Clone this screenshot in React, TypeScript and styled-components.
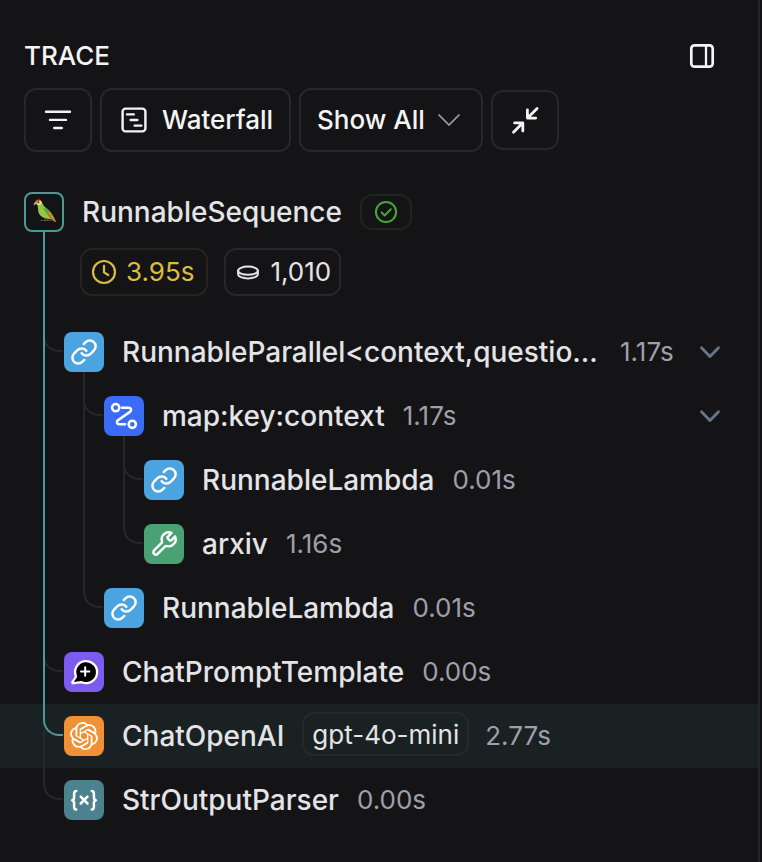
import React from "react";
import styled, { createGlobalStyle, css } from "styled-components";
import { SiOpenai } from "react-icons/si";

const color = {
  bg: "#141416",
  border: "#27272a",
  guide: "#27272a",
  active: "#4b9a96",
  text: "#f4f4f5",
  name: "#e4e4e7",
  muted: "#a09fa9",
};

const GlobalStyle = createGlobalStyle`
  * { box-sizing: border-box; }
  body {
    margin: 0;
    background: #111113;
    font-family: Inter, sans-serif;
    -webkit-font-smoothing: antialiased;
  }
`;

const Panel = styled.aside`
  width: 760px;
  height: 862px;
  background: ${color.bg};
  border-right: 2px solid #262628;
  overflow: hidden;
  color: ${color.text};
`;

const Header = styled.header`
  display: flex;
  align-items: center;
  justify-content: space-between;
  height: 88px;
  padding: 24px 42px 0 24px;
`;

const Title = styled.h1`
  margin: 0;
  font-size: 26px;
  font-weight: 500;
  line-height: 32px;
`;

const PlainButton = styled.button`
  display: flex;
  padding: 0;
  border: 0;
  background: none;
  color: inherit;
`;

const Toolbar = styled.div`
  display: flex;
  align-items: center;
  gap: 8px;
  height: 64px;
  padding: 0 24px;
`;

const ToolButton = styled.button<{ $width: number; $height?: number; $start?: number }>`
  display: flex;
  align-items: center;
  justify-content: ${(p) => (p.$start ? "flex-start" : "center")};
  width: ${(p) => p.$width}px;
  height: ${(p) => p.$height ?? 64}px;
  padding: 0 0 0 ${(p) => p.$start ?? 0}px;
  border: 2px solid ${color.border};
  border-radius: 12px;
  background: transparent;
  color: ${color.text};
  font: 500 26px/32px Inter, sans-serif;
  white-space: nowrap;
`;

const ButtonLabel = styled.span<{ $before?: number; $after?: number }>`
  margin-left: ${(p) => p.$before ?? 0}px;
  margin-right: ${(p) => p.$after ?? 0}px;
`;

const Svg = styled.svg`
  display: block;
  flex: none;
  fill: none;
  stroke: currentColor;
  stroke-linecap: round;
  stroke-linejoin: round;
  overflow: visible;
`;

const Root = styled.section`
  display: grid;
  grid-template-columns: 40px 1fr;
  column-gap: 16px;
  height: 128px;
  margin-top: 40px;
  padding-left: 24px;
`;

const RootRail = styled.div`
  display: flex;
  flex-direction: column;

  &::after {
    content: "";
    flex: 1;
    width: 2px;
    margin-left: 19px;
    background: ${color.active};
  }
`;

const RootAvatar = styled.div`
  display: flex;
  align-items: center;
  justify-content: center;
  width: 40px;
  height: 40px;
  border: 2px solid ${color.active};
  border-radius: 8px;
`;

const RootTitle = styled.div`
  display: flex;
  align-items: center;
  gap: 18px;
  height: 40px;
  padding-left: 2px;
`;

const Status = styled.span`
  display: flex;
  align-items: center;
  justify-content: center;
  width: 52px;
  height: 36px;
  border: 2px solid #1b261d;
  border-radius: 12px;
  color: #47a637;
`;

const Metrics = styled.div`
  display: flex;
  gap: 16px;
  margin-top: 16px;
`;

const Metric = styled.span<{ $tone?: "time" }>`
  display: flex;
  align-items: center;
  gap: 9px;
  height: 48px;
  padding: 0 8px 0 9px;
  border: 2px solid ${color.border};
  border-radius: 12px;
  color: ${color.name};
  font-size: 26px;
  line-height: 32px;
  ${(p) =>
    p.$tone === "time" &&
    css`
      padding-right: 12px;
      border-color: #28241c;
      color: #dcbc3f;
    `}
`;

const Tree = styled.div`
  display: flex;
  flex-direction: column;
`;

const Row = styled.div<{ $selected?: boolean }>`
  display: flex;
  align-items: center;
  height: 64px;
  padding: 0 34px 0 24px;
  background: ${(p) => (p.$selected ? "#1a2122" : "transparent")};
`;

const lineFill = (c: string) =>
  `linear-gradient(${c}, ${c}) 19px 0 / 2px 100% no-repeat`;

const Guide = styled.span<{ $line?: string }>`
  flex: none;
  width: 40px;
  height: 64px;
  background: ${(p) => (p.$line ? lineFill(p.$line) : "none")};
`;

const Elbow = styled.span<{ $color: string }>`
  display: block;
  width: 20px;
  height: 32px;
  margin-left: 19px;
  border: 0 solid ${(p) => p.$color};
  border-width: 0 0 2px 2px;
  border-bottom-left-radius: 16px;
`;

/* Keeps the active line on top of a grey branch that leaves it. */
const Junction = styled(Guide)`
  background: none;
  display: grid;
  grid-template: 64px / 19px 2px 19px;

  &::after {
    content: "";
    grid-area: 1 / 2;
    background: ${color.active};
  }

  & > ${Elbow} {
    grid-area: 1 / 1;
  }
`;

/* The active line turns into the row; the grey line continues below it. */
const ActiveTurn = styled(Guide)`
  background: linear-gradient(${color.guide}, ${color.guide}) 19px 26px / 2px 38px
    no-repeat;
`;

const NodeCell = styled.span<{ $open?: boolean }>`
  display: flex;
  flex: none;
  align-items: center;
  justify-content: center;
  width: 40px;
  height: 64px;
  background: ${(p) =>
    p.$open
      ? `linear-gradient(${color.guide}, ${color.guide}) 19px 52px / 2px 12px no-repeat`
      : "none"};
`;

const NodeIcon = styled.span<{ $bg: string }>`
  display: flex;
  align-items: center;
  justify-content: center;
  width: 40px;
  height: 40px;
  border-radius: 8px;
  background: ${(p) => p.$bg};
  color: #fff;
`;

const Name = styled.span<{ $width?: number }>`
  flex: none;
  width: ${(p) => (p.$width ? `${p.$width}px` : "auto")};
  color: ${color.name};
  font-size: 28px;
  font-weight: 500;
  line-height: 40px;
  white-space: nowrap;
`;

const RowBody = styled.div`
  display: flex;
  flex: 1;
  align-items: center;
  gap: 18px;
  padding-left: 18px;
`;

const ModelTag = styled.span`
  height: 44px;
  margin: 0 -2px 4px 0;
  padding: 0 8px;
  border: 2px solid #26292b;
  border-radius: 12px;
  color: ${color.name};
  font-size: 26px;
  line-height: 41px;
`;

const Duration = styled.span`
  color: ${color.muted};
  font-size: 26px;
  line-height: 32px;
`;

const Toggle = styled(PlainButton)`
  margin-left: auto;
  color: #64748b;
`;

const PanelIcon = () => (
  <Svg width="28" height="28" strokeWidth="2.7">
    <rect x="3.3" y="3.3" width="21.4" height="21.4" rx="3.2" />
    <path d="M18 3.5v21" strokeWidth="2.3" />
  </Svg>
);

const FilterIcon = () => (
  <Svg width="28" height="28" strokeWidth="2.4">
    <path d="M2 5.8h24M6 13.9h16M10.2 22h7.6" />
  </Svg>
);

const WaterfallIcon = () => (
  <Svg width="28" height="28" strokeWidth="2.4">
    <rect x="2.6" y="2.6" width="22.8" height="22.8" rx="3" />
    <path d="M7 8.4h6.8M10.6 14h6.8M14.6 19.6h6.8" />
  </Svg>
);

const CollapseIcon = () => (
  <Svg width="28" height="28" strokeWidth="2.8">
    <path d="M16.4 3.8v8.3h8.3M16.8 11.7l9.3-9.3M3.6 16.9h8.2v8.2M11.4 17.3l-8.9 8.9" />
  </Svg>
);

const ThinChevron = () => (
  <Svg width="22" height="12" strokeWidth="1.7">
    <path d="M1 1l10 10L21 1" stroke="#a1a1aa" />
  </Svg>
);

const ToggleChevron = () => (
  <Svg width="28" height="28" strokeWidth="2.9">
    <path d="M5.5 9.8l8.5 8.6 8.5-8.6" />
  </Svg>
);

const CheckIcon = () => (
  <Svg width="24" height="24" strokeWidth="2">
    <circle cx="12" cy="12" r="10.1" />
    <path d="M7.6 12.4l3 3.1 6.2-6.3" />
  </Svg>
);

const ClockIcon = () => (
  <Svg width="26" height="26" strokeWidth="2.2">
    <circle cx="13" cy="13" r="11" />
    <path d="M13 6.8v6.6l4.2 2.6" />
  </Svg>
);

const CoinIcon = () => (
  <Svg width="26" height="26" strokeWidth="2">
    <ellipse cx="13" cy="11.7" rx="9.9" ry="4.1" />
    <path d="M3.1 11.7v3.4c0 2.5 4.4 4.3 9.9 4.3s9.9-1.8 9.9-4.3v-3.4" />
  </Svg>
);

const ParrotIcon = () => (
  <Svg width="30" height="30" viewBox="0.8 0 28 28">
    <g stroke="none">
      <path d="M11.5 22h10" stroke="#4c4c49" strokeWidth="1" />
      <path d="M16 19.5l-.4 2M18.4 20v1.8" stroke="#6b5f4c" strokeWidth="1.1" />
      <path
        d="M7 3.2C9.5 2 12.6 3 13.4 6c.4 1.7 2 3.2 4 4.8 3.4 2.6 5.7 6 8.2 11.4.4 1-.5 1.2-1.1.6-1.8-1.6-3.6-2.5-5.8-2.6-4.6-.2-8.6-2.8-9.3-7.2-.3-2-.1-3.8-.7-5L7 3.2Z"
        fill="#92c648"
      />
      <path d="M14.4 9.6c3.8 2 6.7 5.3 8.5 8.9-4.1-.9-7.3-3.9-8.5-8.9Z" fill="#5da038" />
      <path d="M17.8 16.2c2.5 1 5.2 3.6 7.9 6.2.5.8-.4 1.1-1.1.5-2.6-2.1-5-3.4-6.8-6.7Z" fill="#e4562f" />
      <path d="M19 13.1c1.8 1.5 3.2 3.4 4.3 5.4l-3.9-2.4-.4-3Z" fill="#d88c2c" />
      <path d="M7.5 3.2c2.2-1.2 5-.4 5.4 2.2-.3 1.7-2 2.6-3.8 2L7 5.6Z" fill="#edda64" />
      <path d="M7.1 3.3c1.2-1.1 3-1.4 4.4-.6L8.8 4.4 7 4.9Z" fill="#cf3d32" />
      <path d="M8.3 4.7C6.6 3.9 5 5 5.3 8c.8-.9 2-1 2.8-1.6Z" fill="#bda58b" />
      <circle cx="9.7" cy="5" r=".8" fill="#202322" />
    </g>
  </Svg>
);

const LinkIcon = () => (
  <Svg width="28" height="28" viewBox="0 0 24 24" strokeWidth="2.1">
    <path d="M10 13a5 5 0 0 0 7.54.54l3-3a5 5 0 0 0-7.07-7.07l-1.72 1.71" />
    <path d="M14 11a5 5 0 0 0-7.54-.54l-3 3a5 5 0 0 0 7.07 7.07l1.71-1.71" />
  </Svg>
);

const RouteIcon = () => (
  <Svg width="28" height="28" strokeWidth="2.5">
    <circle cx="5.7" cy="5.7" r="3.6" />
    <circle cx="22.3" cy="22.3" r="3.6" />
    <path d="M12 5.8h6.6c2.6 0 3.3 2.5 1.4 4.1L7.9 18.2c-1.8 1.6-1 4.1 1.4 4.1h5.8" />
  </Svg>
);

const WrenchIcon = () => (
  <Svg width="28" height="28" viewBox="0 0 24 24" strokeWidth="2.1">
    <path d="M15.63 7.63c-.39-.4-.59-.59-.67-.82a1 1 0 0 1 0-.62c.08-.23.28-.43.67-.82l2.84-2.84A6 6 0 0 0 10 8c0 .49.06.97.17 1.43.12.48.18.73.17.88-.01.17-.04.25-.11.4-.07.13-.21.27-.48.54L3.5 17.5a2.12 2.12 0 0 0 3 3l6.25-6.25c.27-.27.41-.41.54-.48.15-.07.23-.1.4-.11.15-.01.4.05.88.17A6 6 0 0 0 21.47 5.53l-2.84 2.84c-.39.39-.59.59-.82.67a1 1 0 0 1-.62 0c-.23-.08-.43-.28-.82-.67Z" />
  </Svg>
);

const MessageIcon = () => (
  <Svg width="28" height="28" strokeWidth="2.3">
    <path
      d="M5.9 18.2A11 11 0 1 1 11.8 24.2l-8.4.9c-1 .1-1.3-.5-.9-1.3 1-1.9 3.6-4 3.4-5.6Z"
      fill="#000"
    />
    <path d="M15.2 9.3v8.4M11 13.5h8.4" strokeWidth="2" />
  </Svg>
);

const VariableIcon = () => (
  <Svg width="28" height="28" strokeWidth="2.5">
    <path d="M6.2 5C4.4 5 4.1 6.2 4.1 7.8v3.4c0 1.8-.6 2.8-2 3 1.4.3 2 1.2 2 3v3.5c0 1.6.3 2.8 2.1 2.8M21.8 5c1.8 0 2.1 1.2 2.1 2.8v3.4c0 1.8.6 2.8 2 3-1.4.3-2 1.2-2 3v3.5c0 1.6-.3 2.8-2.1 2.8M10.7 10.7l6.8 6.8M17.5 10.7l-6.8 6.8" />
  </Svg>
);

const kinds = {
  link: { bg: "#4ba3df", icon: <LinkIcon /> },
  route: { bg: "#3b6cf8", icon: <RouteIcon /> },
  tool: { bg: "#4aa173", icon: <WrenchIcon /> },
  prompt: { bg: "#7c5cee", icon: <MessageIcon /> },
  llm: { bg: "#f19136", icon: <SiOpenai size={28} /> },
  parser: { bg: "#4b828e", icon: <VariableIcon /> },
};

type GuideKind = "active" | "line" | "branch" | "last" | "activeBranch" | "activeTurn";

interface RunNode {
  name: string;
  nameWidth?: number;
  kind: keyof typeof kinds;
  time: string;
  guides: GuideKind[];
  open?: boolean;
  selected?: boolean;
  model?: string;
}

const runs: RunNode[] = [
  { name: "RunnableParallel<context,questio...", nameWidth: 480, kind: "link", time: "1.17s", guides: ["activeBranch"], open: true },
  { name: "map:key:context", kind: "route", time: "1.17s", guides: ["active", "branch"], open: true },
  { name: "RunnableLambda", kind: "link", time: "0.01s", guides: ["active", "line", "branch"] },
  { name: "arxiv", kind: "tool", time: "1.16s", guides: ["active", "line", "last"] },
  { name: "RunnableLambda", kind: "link", time: "0.01s", guides: ["active", "last"] },
  { name: "ChatPromptTemplate", kind: "prompt", time: "0.00s", guides: ["activeBranch"] },
  { name: "ChatOpenAI", kind: "llm", time: "2.77s", guides: ["activeTurn"], selected: true, model: "gpt-4o-mini" },
  { name: "StrOutputParser", kind: "parser", time: "0.00s", guides: ["last"] },
];

function TreeGuide({ kind }: { kind: GuideKind }) {
  switch (kind) {
    case "active":
      return <Guide $line={color.active} />;
    case "line":
      return <Guide $line={color.guide} />;
    case "branch":
      return (
        <Guide $line={color.guide}>
          <Elbow $color={color.guide} />
        </Guide>
      );
    case "last":
      return (
        <Guide>
          <Elbow $color={color.guide} />
        </Guide>
      );
    case "activeBranch":
      return (
        <Junction>
          <Elbow $color={color.guide} />
        </Junction>
      );
    case "activeTurn":
      return (
        <ActiveTurn>
          <Elbow $color={color.active} />
        </ActiveTurn>
      );
  }
}

function RunRow({ run }: { run: RunNode }) {
  const { bg, icon } = kinds[run.kind];
  return (
    <Row $selected={run.selected}>
      {run.guides.map((g, i) => (
        <TreeGuide key={i} kind={g} />
      ))}
      <NodeCell $open={run.open}>
        <NodeIcon $bg={bg}>{icon}</NodeIcon>
      </NodeCell>
      <RowBody>
        <Name $width={run.nameWidth}>{run.name}</Name>
        {run.model && <ModelTag>{run.model}</ModelTag>}
        <Duration>{run.time}</Duration>
        {run.open && (
          <Toggle aria-label="Toggle children">
            <ToggleChevron />
          </Toggle>
        )}
      </RowBody>
    </Row>
  );
}

export default function App() {
  return (
    <>
      <GlobalStyle />
      <Panel>
        <Header>
          <Title>TRACE</Title>
          <PlainButton aria-label="Toggle panel">
            <PanelIcon />
          </PlainButton>
        </Header>
        <Toolbar>
          <ToolButton $width={68} aria-label="Filter">
            <FilterIcon />
          </ToolButton>
          <ToolButton $width={191} $start={18}>
            <WaterfallIcon />
            <ButtonLabel $before={14}>Waterfall</ButtonLabel>
          </ToolButton>
          <ToolButton $width={184} $start={16}>
            <ButtonLabel $after={13}>Show All</ButtonLabel>
            <ThinChevron />
          </ToolButton>
          <ToolButton $width={68} $height={60} aria-label="Collapse all">
            <CollapseIcon />
          </ToolButton>
        </Toolbar>
        <Root>
          <RootRail>
            <RootAvatar>
              <ParrotIcon />
            </RootAvatar>
          </RootRail>
          <div>
            <RootTitle>
              <Name>RunnableSequence</Name>
              <Status>
                <CheckIcon />
              </Status>
            </RootTitle>
            <Metrics>
              <Metric $tone="time">
                <ClockIcon />
                3.95s
              </Metric>
              <Metric>
                <CoinIcon />
                1,010
              </Metric>
            </Metrics>
          </div>
        </Root>
        <Tree>
          {runs.map((run, i) => (
            <RunRow key={i} run={run} />
          ))}
        </Tree>
      </Panel>
    </>
  );
}
